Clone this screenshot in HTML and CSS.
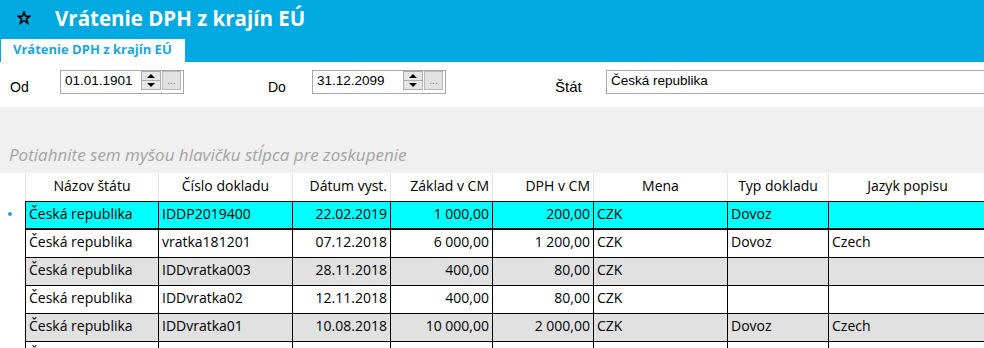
FILE: index.html
```html
<!DOCTYPE html>
<html lang="sk">
<head>
  <meta charset="UTF-8">
  <meta name="viewport" content="width=device-width, initial-scale=1.0">
  <title>Vrátenie DPH z krajín EÚ</title>
  <link rel="stylesheet" href="styles.css">
</head>
<body>
<div class="app">
  <header class="titlebar">
    <div class="title-row">
      <svg class="star" width="14" height="14" viewBox="0 0 14 14">
        <polygon points="7,1.2 8.6,5.2 12.8,5.3 9.5,7.9 10.7,12.2 7,9.7 3.3,12.2 4.5,7.9 1.2,5.3 5.4,5.2" fill="none" stroke="#000" stroke-width="1.6" stroke-linejoin="miter"/>
      </svg>
      <h1>Vrátenie DPH z krajín EÚ</h1>
    </div>
    <div class="tabs">
      <div class="tab active">Vrátenie DPH z krajín EÚ</div>
    </div>
  </header>

  <div class="filters">
    <label class="lbl lbl-od">Od</label>
    <div class="datebox box-od">
      <span class="val">01.01.1901</span>
      <div class="spin"><span class="up"></span><span class="down"></span></div>
      <button class="dots">...</button>
    </div>
    <label class="lbl lbl-do">Do</label>
    <div class="datebox box-do">
      <span class="val">31.12.2099</span>
      <div class="spin"><span class="up"></span><span class="down"></span></div>
      <button class="dots">...</button>
    </div>
    <label class="lbl lbl-stat">Štát</label>
    <div class="combo"><span class="val">Česká republika</span></div>
  </div>

  <div class="group-panel">Potiahnite sem myšou hlavičku stĺpca pre zoskupenie</div>

  <table class="grid">
    <colgroup>
      <col class="c-ind"><col class="c-nazov"><col class="c-cislo"><col class="c-datum"><col class="c-zaklad"><col class="c-dph"><col class="c-mena"><col class="c-typ"><col class="c-jazyk">
    </colgroup>
    <thead>
      <tr>
        <th class="ind"></th>
        <th>Názov štátu</th>
        <th>Číslo dokladu</th>
        <th class="num">Dátum vyst.</th>
        <th class="num">Základ v CM</th>
        <th class="num">DPH v CM</th>
        <th>Mena</th>
        <th>Typ dokladu</th>
        <th>Jazyk popisu</th>
      </tr>
    </thead>
    <tbody>
      <tr class="selected">
        <td class="ind"><span class="dot"></span></td>
        <td>Česká republika</td><td>IDDP2019400</td><td class="num">22.02.2019</td><td class="num">1 000,00</td><td class="num">200,00</td><td>CZK</td><td>Dovoz</td><td></td>
      </tr>
      <tr>
        <td class="ind"></td>
        <td>Česká republika</td><td>vratka181201</td><td class="num">07.12.2018</td><td class="num">6 000,00</td><td class="num">1 200,00</td><td>CZK</td><td>Dovoz</td><td>Czech</td>
      </tr>
      <tr class="alt">
        <td class="ind"></td>
        <td>Česká republika</td><td>IDDvratka003</td><td class="num">28.11.2018</td><td class="num">400,00</td><td class="num">80,00</td><td>CZK</td><td></td><td></td>
      </tr>
      <tr>
        <td class="ind"></td>
        <td>Česká republika</td><td>IDDvratka02</td><td class="num">12.11.2018</td><td class="num">400,00</td><td class="num">80,00</td><td>CZK</td><td></td><td></td>
      </tr>
      <tr class="alt">
        <td class="ind"></td>
        <td>Česká republika</td><td>IDDvratka01</td><td class="num">10.08.2018</td><td class="num">10 000,00</td><td class="num">2 000,00</td><td>CZK</td><td>Dovoz</td><td>Czech</td>
      </tr>
      <tr>
        <td class="ind"></td>
        <td>Česká republika</td><td>vratka170324</td><td class="num">24.03.2017</td><td class="num">1 000,00</td><td class="num">200,00</td><td>CZK</td><td></td><td></td>
      </tr>
    </tbody>
  </table>
</div>
</body>
</html>
```

FILE: styles.css
```css
html, body { margin: 0; padding: 0; background: #fff; overflow: hidden; }
body { font-family: "Open Sans", "Noto Sans", sans-serif; color: #000; width: 984px; height: 348px; }

/* titulok */
.titlebar { background: #00a9e0; }
.title-row { height: 39px; display: flex; align-items: center; }
.star { margin-left: 17px; margin-right: 24px; margin-top: -3px; }
.title-row h1 { margin: 0; font-size: 20.5px; font-weight: 700; color: #fff; margin-top: -3px; }
.tabs { height: 23px; display: flex; padding-left: 1px; }
.tab { width: 184px; background: #fff; color: #1ba5dc; font-weight: 700; font-size: 13px; padding-left: 12px; box-sizing: border-box; line-height: 21px; }

/* filtre */
.filters { height: 45px; display: flex; align-items: flex-start; font-family: "Liberation Sans", Arial, sans-serif; overflow: hidden; }
.filters > * { flex-shrink: 0; }
.lbl { font-size: 14px; margin-top: 17px; }
.lbl-od { margin-left: 10px; width: 50px; }
.lbl-do { margin-left: 84px; width: 44px; }
.lbl-stat { margin-left: 109px; width: 51px; font-size: 15px; margin-top: 16px; }
.datebox, .combo { margin-top: 8px; height: 24px; box-sizing: border-box; border: 1px solid #a7a7a7; display: flex; align-items: flex-start; background: #fff; }
.box-od { width: 124px; }
.box-do { width: 134px; }
.val { font-size: 13.5px; padding-left: 4px; line-height: 19px; flex: 1; }
.spin { width: 20px; height: 19px; display: flex; flex-direction: column; box-sizing: border-box; border: 1px solid #adadad; background: #e6e6e6; }
.spin span { flex: 1; display: flex; align-items: center; justify-content: center; }
.spin .up { border-bottom: 1px solid #adadad; }
.spin .up::after { content: ""; border-left: 4px solid transparent; border-right: 4px solid transparent; border-bottom: 4px solid #000; }
.spin .down::after { content: ""; border-left: 4px solid transparent; border-right: 4px solid transparent; border-top: 4px solid #000; }
.dots { width: 19px; height: 19px; margin: 0 2px 0 1px; padding: 0; box-sizing: border-box; border: 1px solid #b9b9b9; background: #e1e1e1; color: #a0662c; font-size: 10px; line-height: 18px; font-family: "Liberation Sans", Arial, sans-serif; }
.combo { width: 400px; border-right: none; }

/* zoskupovanie */
.group-panel { height: 66px; background: #f0f0f0; color: #a3a3a3; font-style: italic; font-size: 17px; box-sizing: border-box; padding: 36px 0 0 9px; }

/* mriežka */
.grid { border-collapse: separate; border-spacing: 0; table-layout: fixed; width: 986px; font-size: 14px; }
.c-ind { width: 25px; }
.c-nazov { width: 133px; }
.c-cislo { width: 134px; }
.c-datum { width: 98px; }
.c-zaklad { width: 102px; }
.c-dph { width: 101px; }
.c-mena { width: 134px; }
.c-typ { width: 101px; }
.c-jazyk { width: 158px; }
.grid tr { height: 28px; }
.grid th { font-weight: 400; border-left: 1px solid #e4e4e4; padding: 0 3px 3px; text-align: center; white-space: nowrap; overflow: hidden; }
.grid td { border-left: 1px solid #000; border-top: 1px solid #000; padding: 0 3px 4px; white-space: nowrap; overflow: hidden; }
.grid th.num, .grid td.num { text-align: right; }
.grid th.ind { border-left: none; }
.grid td.ind { border: none; background: #fff; position: relative; }
.grid tr.alt td { background: #e1e1e1; }
.grid tr.alt td.ind { background: #fff; }
.grid tr.selected td { background: repeating-linear-gradient(90deg, #c00000 0 1px, #000 1px 2px) bottom / 100% 1px no-repeat, #00ffff; }
.grid tr.selected td.ind { background: #fff; }
.dot { position: absolute; left: 8px; top: 11px; width: 4px; height: 4px; border-radius: 50%; background: #2a9fd8; }
```
